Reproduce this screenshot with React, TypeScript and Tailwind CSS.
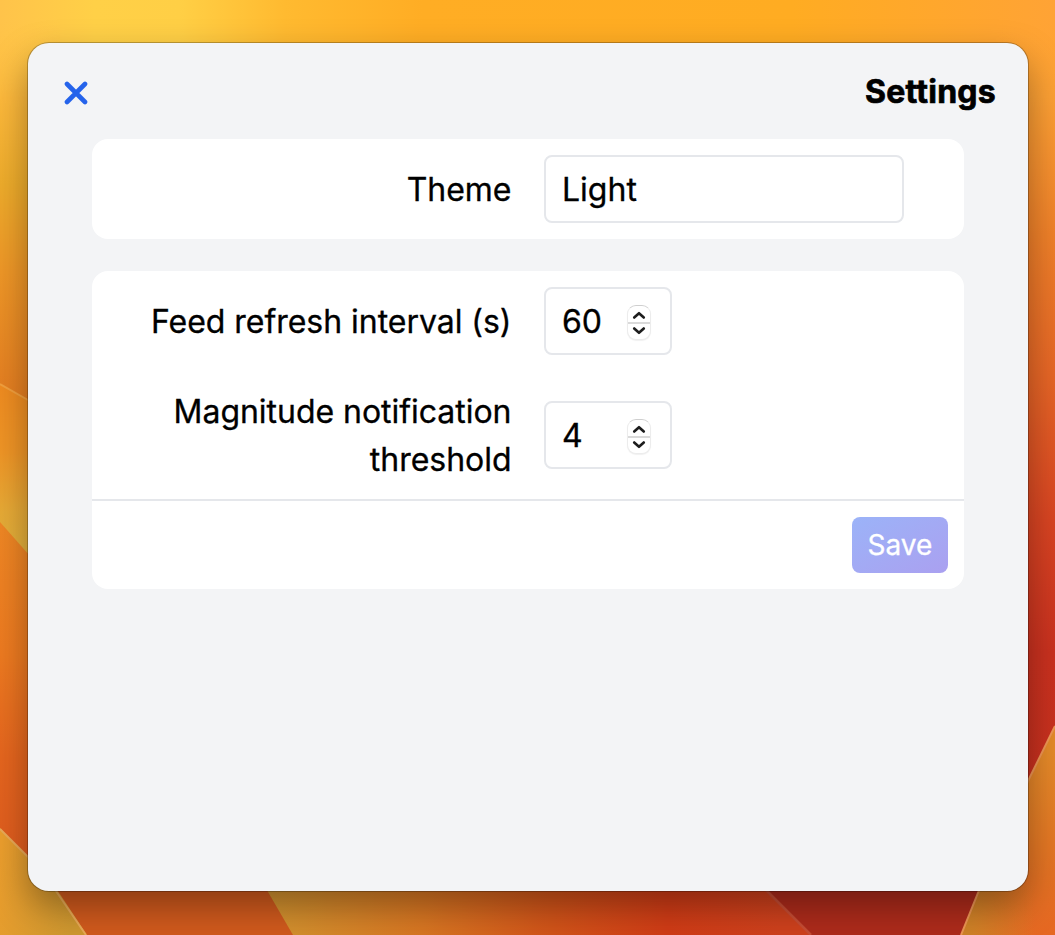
import React, { useState } from "react";

function Wallpaper() {
  return (
    <svg className="absolute inset-0 h-full w-full" viewBox="0 0 1055 935" preserveAspectRatio="none" aria-hidden="true">
      <defs>
        <linearGradient id="top" x1="0" y1="0" x2="1055" y2="0" gradientUnits="userSpaceOnUse">
          <stop offset="0" stopColor="#ffc34a" />
          <stop offset="0.09" stopColor="#ffd047" />
          <stop offset="0.17" stopColor="#ffcf45" />
          <stop offset="0.27" stopColor="#ffba30" />
          <stop offset="0.4" stopColor="#ffad24" />
          <stop offset="0.75" stopColor="#ffac22" />
          <stop offset="1" stopColor="#ffa335" />
        </linearGradient>
        <linearGradient id="left" x1="0" y1="20" x2="0" y2="410" gradientUnits="userSpaceOnUse">
          <stop offset="0" stopColor="#ffc545" stopOpacity="0" />
          <stop offset="0.2" stopColor="#fdb93c" />
          <stop offset="0.42" stopColor="#eeac2b" />
          <stop offset="0.65" stopColor="#ee9627" />
          <stop offset="1" stopColor="#e37b20" />
        </linearGradient>
        <linearGradient id="fold" x1="0" y1="384" x2="0" y2="555" gradientUnits="userSpaceOnUse">
          <stop offset="0" stopColor="#ef8b20" />
          <stop offset="0.4" stopColor="#ef9526" />
          <stop offset="0.75" stopColor="#e7aa36" />
          <stop offset="1" stopColor="#e2b03b" />
        </linearGradient>
        <linearGradient id="lowerLeft" x1="0" y1="520" x2="0" y2="860" gradientUnits="userSpaceOnUse">
          <stop offset="0" stopColor="#ef8724" />
          <stop offset="0.4" stopColor="#ed7a20" />
          <stop offset="0.7" stopColor="#e5651e" />
          <stop offset="1" stopColor="#de5b1e" />
        </linearGradient>
        <linearGradient id="corner" x1="0" y1="850" x2="85" y2="870" gradientUnits="userSpaceOnUse">
          <stop offset="0" stopColor="#eb9e2d" />
          <stop offset="1" stopColor="#cf9830" />
        </linearGradient>
        <linearGradient id="bottom" x1="270" y1="0" x2="780" y2="0" gradientUnits="userSpaceOnUse">
          <stop offset="0" stopColor="#d3932f" />
          <stop offset="0.3" stopColor="#d87622" />
          <stop offset="0.55" stopColor="#d25419" />
          <stop offset="0.78" stopColor="#d13c16" />
          <stop offset="1" stopColor="#cf411d" />
        </linearGradient>
        <linearGradient id="right" x1="0" y1="20" x2="0" y2="790" gradientUnits="userSpaceOnUse">
          <stop offset="0" stopColor="#ffa432" stopOpacity="0" />
          <stop offset="0.1" stopColor="#fca034" />
          <stop offset="0.28" stopColor="#ef8029" />
          <stop offset="0.46" stopColor="#e66626" />
          <stop offset="0.65" stopColor="#d84422" />
          <stop offset="0.82" stopColor="#c9311f" />
          <stop offset="1" stopColor="#c7301e" />
        </linearGradient>
        <linearGradient id="rightCorner" x1="1010" y1="760" x2="1055" y2="935" gradientUnits="userSpaceOnUse">
          <stop offset="0" stopColor="#e48a29" />
          <stop offset="0.5" stopColor="#e37724" />
          <stop offset="1" stopColor="#e66722" />
        </linearGradient>
        <linearGradient id="rightGold" x1="970" y1="0" x2="1035" y2="0" gradientUnits="userSpaceOnUse">
          <stop offset="0" stopColor="#d08227" />
          <stop offset="1" stopColor="#d08227" stopOpacity="0" />
        </linearGradient>
      </defs>
      <rect width="1055" height="200" fill="url(#top)" />
      <path d="M0 20H60V420H0Z" fill="url(#left)" />
      <path d="M1000 20H1055V935H1000Z" fill="url(#right)" />
      <path d="M0 384L28 400L60 418V600H0Z" fill="url(#fold)" />
      <path d="M0 384L28 400" stroke="#f2a03e" strokeWidth="2" />
      <path d="M0 522L60 590V935H0Z" fill="url(#lowerLeft)" />
      <path d="M0 828L56 888L88 935H0Z" fill="url(#corner)" />
      <path d="M54 885H300V935H87Z" fill="#d15a1d" />
      <path d="M0 829L28 857L56 891L86 935" fill="none" stroke="#e9a957" strokeWidth="2" />
      <path d="M264 885H780L811 935H293Z" fill="url(#bottom)" />
      <path d="M760 885H990L962 935H811Z" fill="#ae2b1b" />
      <path d="M764 888L811 935" stroke="#c74d34" strokeWidth="2.5" />
      <path d="M1055 727L1028 782L980 888L961 935H1055Z" fill="url(#rightCorner)" />
      <path d="M981 885L961 935H1040V885Z" fill="url(#rightGold)" />
      <path d="M1055 726L1028 781L980 888L961 935" fill="none" stroke="#ee9553" strokeWidth="2" />
    </svg>
  );
}

function Stepper({ onStep }: { onStep: (delta: number) => void }) {
  return (
    <span className="mt-[3px] flex h-[35px] w-6 flex-col overflow-hidden rounded-[9px] border border-[#ececec] border-t-[#cfcfcf] bg-white shadow-[0_1px_1px_rgba(0,0,0,0.06)]">
      <button type="button" aria-label="Increase" onClick={() => onStep(1)} className="flex h-[18px] items-end justify-center border-b-2 border-[#dadada] pb-[2px]">
        <svg width="14" height="9" viewBox="0 0 14 9" fill="none" stroke="#1d1d1d" strokeWidth="2.6" strokeLinecap="round" strokeLinejoin="round">
          <path d="M2.2 6.5L7 2.2L11.8 6.5" />
        </svg>
      </button>
      <button type="button" aria-label="Decrease" onClick={() => onStep(-1)} className="flex h-[15px] items-start justify-center pt-[2px]">
        <svg width="14" height="9" viewBox="0 0 14 9" fill="none" stroke="#1d1d1d" strokeWidth="2.6" strokeLinecap="round" strokeLinejoin="round">
          <path d="M2.2 2.5L7 6.8L11.8 2.5" />
        </svg>
      </button>
    </span>
  );
}

function NumberField({ initial }: { initial: number }) {
  const [value, setValue] = useState(initial);
  return (
    <div className="flex h-[68px] w-32 items-center justify-between rounded-lg border-2 border-gray-200 bg-white pr-[19px] pl-4">
      <span className="pt-0.5">{value}</span>
      <Stepper onStep={(delta) => setValue(value + delta)} />
    </div>
  );
}

function Row({ label, children }: { label: string; children: React.ReactNode }) {
  return (
    <div className="flex items-center gap-8">
      <div className="-mb-0.5 w-[420px] shrink-0 pr-[0.5px] pl-4 text-right tracking-[-0.03px]">{label}</div>
      {children}
    </div>
  );
}

export default function App() {
  return (
    <div className="relative h-[935px] w-[1055px] overflow-hidden bg-[#ef8522] px-[28px] pt-[43px] font-['Inter',sans-serif] text-[32px] leading-[48px] text-black [-webkit-text-stroke:0.3px]">
      <Wallpaper />
      <main className="relative h-[848px] w-[1000px] rounded-[21px] bg-gray-100 shadow-[0_0_0_1px_rgba(0,0,0,0.25),0_16px_36px_rgba(0,0,0,0.34)]">
        <header className="flex h-24 items-center justify-between pr-[32px] pl-9">
          <button type="button" aria-label="Close" className="pt-1">
            <svg width="24" height="24" viewBox="0 0 24 24" fill="none" stroke="#2563eb" strokeWidth="4.6" strokeLinecap="round">
              <path d="M3 3L21 21M21 3L3 21" />
            </svg>
          </button>
          <h1 className="pt-0.5 font-bold tracking-[0.25px] [-webkit-text-stroke:0.7px]">Settings</h1>
        </header>
        <div className="flex flex-col gap-8 px-16">
          <section className="rounded-2xl bg-white py-4">
            <Row label="Theme">
              <div className="flex h-[68px] w-[360px] items-center rounded-lg border-2 border-gray-200 bg-white px-4 pt-0.5">Light</div>
            </Row>
          </section>
          <section className="rounded-2xl bg-white pt-4">
            <div className="grid grid-rows-[68px_96px] items-center gap-8">
              <Row label="Feed refresh interval (s)">
                <NumberField initial={60} />
              </Row>
              <Row label="Magnitude notification threshold">
                <NumberField initial={4} />
              </Row>
            </div>
            <footer className="mt-4 flex justify-end border-t-2 border-gray-200 p-4">
              <button type="button" className="h-14 w-24 rounded-lg bg-linear-to-br from-[#9bb3f8] to-[#aaa0f0] text-[28px] leading-10 text-white">
                Save
              </button>
            </footer>
          </section>
        </div>
      </main>
    </div>
  );
}
